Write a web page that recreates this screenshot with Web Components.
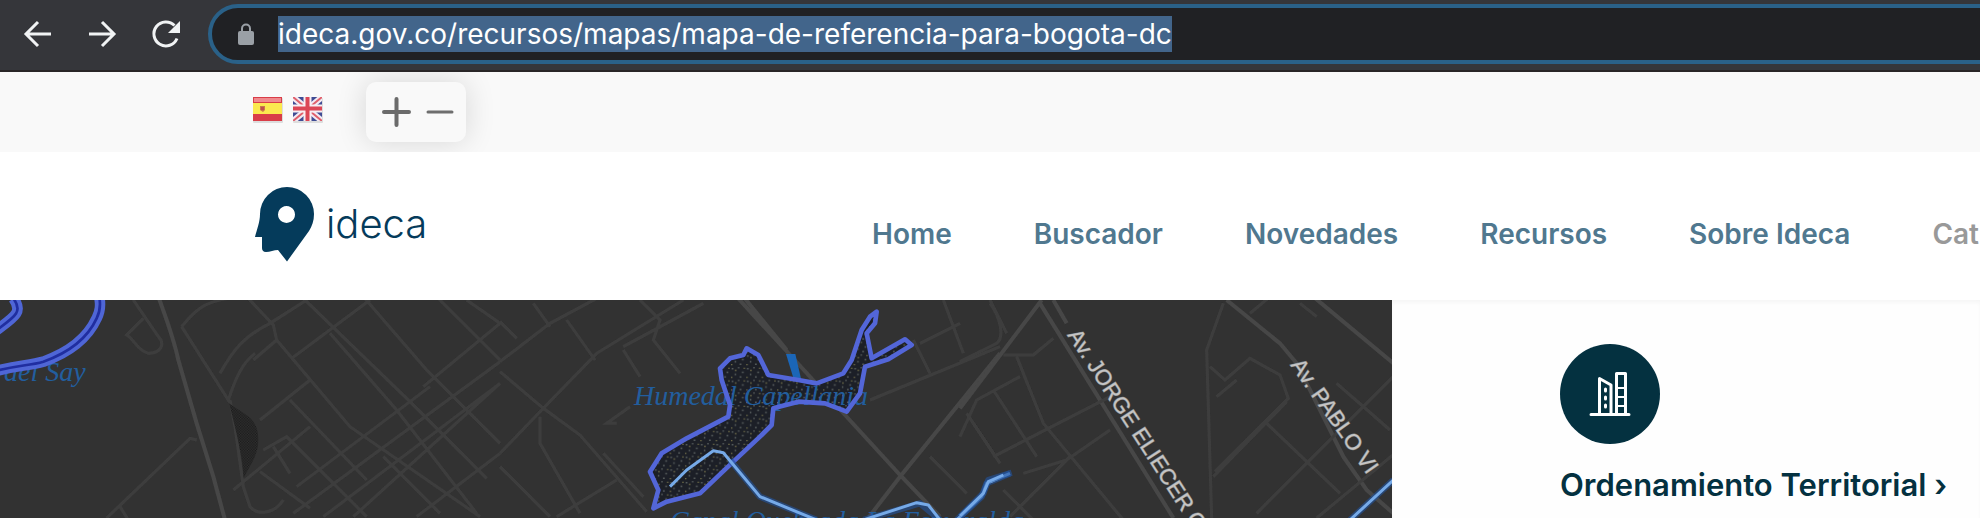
<!DOCTYPE html>
<html lang="es">
<head>
<meta charset="utf-8">
<meta name="viewport" content="width=device-width, initial-scale=1">
<title>Mapa de referencia para Bogotá D.C.</title>
<style>
  html, body { margin: 0; height: 100%; }
  body { font-family: Inter, "Liberation Sans", sans-serif; background: #fff; overflow: hidden; }
</style>
</head>
<body>
<ideca-page></ideca-page>

<script>
const define = (name, html) => {
  const template = document.createElement('template');
  template.innerHTML = html;
  customElements.define(name, class extends HTMLElement {
    constructor() {
      super();
      this.attachShadow({ mode: 'open' }).append(template.content.cloneNode(true));
    }
  });
};

define('browser-bar', `
<style>
  :host { display: flex; align-items: center; box-sizing: border-box; height: 72px; padding: 0 0 2px 20px;
    background: #35363a; border-bottom: 2px solid #292627; overflow: hidden; }
  button { flex: none; width: 36px; height: 36px; margin-right: 28px; padding: 0; border: 0; background: none; }
  button svg { display: block; }
  form { flex: 1; display: flex; align-items: center; box-sizing: border-box; height: 60px; margin: 0 -40px 0 -4px;
    padding-left: 26px; border: 4px solid #2a6188; border-radius: 30px; background: #202124; }
  .lock { flex: none; width: 16px; height: 22px; margin-right: 24px; }
  input { width: 894px; height: 36px; box-sizing: border-box; padding: 0; border: 0; outline: 0;
    background: #42658b; color: #fff; font: 28px/36px Inter, sans-serif; }
</style>
<button aria-label="Atrás"><svg width="36" height="36" viewBox="0 0 36 36" fill="none" stroke="#f1f3f4" stroke-width="3"><path d="M31 18H7M18 6 6 18l12 12"/></svg></button>
<button aria-label="Adelante"><svg width="36" height="36" viewBox="0 0 36 36" fill="none" stroke="#f1f3f4" stroke-width="3"><path d="M5 18h24M18 6l12 12-12 12"/></svg></button>
<button aria-label="Recargar"><svg width="36" height="36" viewBox="0 0 36 36" fill="none" stroke="#f1f3f4" stroke-width="3"><path d="M29 22.500A12 12 0 1 1 26.500 9.500"/><path d="M32 5v12H20z" fill="#f1f3f4" stroke="none"/></svg></button>
<form>
  <svg class="lock" viewBox="0 0 16 22"><path d="M4 9V5.500a4 4 0 0 1 8 0V9" fill="none" stroke="#9aa0a6" stroke-width="2"/><rect y="8" width="16" height="14" rx="2" fill="#9aa0a6"/></svg>
  <input aria-label="Dirección" value="ideca.gov.co/recursos/mapas/mapa-de-referencia-para-bogota-dc">
</form>`);

define('utility-bar', `
<style>
  :host { display: flex; align-items: center; box-sizing: border-box; height: 80px; padding-left: 252px;
    background: #f9f9f9; overflow: hidden; }
  a { display: block; width: 32px; height: 32px; margin: 0 8px 6px 0; }
  .zoom { display: flex; align-items: center; justify-content: space-between; box-sizing: border-box;
    width: 100px; height: 60px; margin-left: 34px; padding: 0 11px 0 15px; border-radius: 10px;
    background: #f9f9f9; box-shadow: 0 0 30px rgba(0,0,0,.14); }
  button { width: 32px; height: 32px; padding: 0; border: 0; background: none; }
  svg { display: block; }
</style>
<a href="#es" aria-label="Español"><svg width="32" height="32"><rect x="1" y="5" width="30" height="25" rx="1" fill="#ddd"/><rect x="1" y="4" width="29" height="24" fill="#d93d48"/><rect x="2" y="5" width="27" height="4" fill="#f08a8e"/><rect x="1" y="10" width="29" height="11" fill="#fbe94f"/><path d="M8 13h5v4l-2 2-3-2z" fill="#c97a4a"/><path d="M9 14h3v3H9z" fill="#c0504d"/></svg></a>
<a href="#en" aria-label="English"><svg width="32" height="32"><rect x="1" y="5" width="30" height="25" rx="1" fill="#ddd"/><svg x="1" y="4" width="29" height="24" viewBox="0 0 29 24"><path fill="#3f4c94" d="M0 0h29v24H0z"/><path d="M0 0l29 24M29 0 0 24" stroke="#f3eaf2" stroke-width="6"/><path d="M0 0l29 24M29 0 0 24" stroke="#e0606c" stroke-width="2"/><path d="M14.500 0v24M0 11.500h29" stroke="#f8eef2" stroke-width="8"/><path d="M14.500 0v24M0 11.500h29" stroke="#dc4656" stroke-width="4"/></svg></svg></a>
<div class="zoom">
  <button aria-label="Aumentar texto"><svg width="32" height="32" stroke="#6b6b6b" stroke-width="4" stroke-linecap="round"><path d="M3 16h25M15.500 3v26"/></svg></button>
  <button aria-label="Reducir texto"><svg width="32" height="32" stroke="#6e6e6e" stroke-width="3" stroke-linecap="round"><path d="M5 16h24"/></svg></button>
</div>`);

define('nav-link', `
<style>
  :host { display: block; flex: none; }
  a { color: #50788f; text-decoration: none; font-size: 28px; font-weight: 600; line-height: 36px; white-space: nowrap; }
  :host([muted]) a { color: #999; }
</style>
<a href="#"><slot></slot></a>`);

define('site-header', `
<style>
  :host { display: flex; box-sizing: border-box; height: 148px; padding-left: 254px; background: #fff; overflow: hidden; }
  .brand { flex: none; display: flex; width: 618px; padding-top: 34px; box-sizing: border-box; color: #053b5b; text-decoration: none; }
  .brand svg { width: 60px; height: 76px; margin-right: 12px; }
  .brand span { font-size: 40px; font-weight: 300; line-height: 48px; padding-top: 14px; }
  nav { display: flex; gap: 82px; padding-top: 64px; }
</style>
<a class="brand" href="#"><svg viewBox="0 0 60 76"><path fill="#053b5b" fill-rule="evenodd" d="M1 51c2-8 5-15 5-23a27 27 0 0 1 54 0c0 7-2 12-5 17L33 75.500 24 64c-4 0-8 2-12 2-3 0-4-2-4-4V51zM32.500 20a8.500 8.500 0 1 0 .01 0z"/></svg><span>ideca</span></a>
<nav aria-label="Principal">
  <nav-link>Home</nav-link><nav-link>Buscador</nav-link><nav-link>Novedades</nav-link><nav-link>Recursos</nav-link><nav-link>Sobre Ideca</nav-link><nav-link muted>Cat</nav-link>
</nav>`);

define('city-map', `
<style>
  :host { display: block; background: #323232; overflow: hidden; }
  svg { display: block; width: 100%; height: 100%; }
  .road { fill: none; stroke: #3e3e3e; stroke-width: 9; }
  .main { stroke: #474747; stroke-width: 12; }
  .river { fill: none; stroke: #76aae8; stroke-width: 9; stroke-linejoin: round; }
  .glow { stroke: #22549e; stroke-width: 19; opacity: .6; }
  .shore { fill: none; stroke: #5366d8; stroke-width: 14; stroke-linejoin: round; }
  .water { font: italic 28px "Liberation Serif", serif; fill: #225e9e; }
  .street { font: 22px "Liberation Sans", sans-serif; fill: #c4c4c4; stroke: #c4c4c4; stroke-width: 1; stroke-opacity: .5; }
</style>
<svg viewBox="0 0 1392 218" preserveAspectRatio="xMinYMin slice" role="img" aria-label="Mapa de referencia">
  <defs>
    <pattern id="marsh" width="8" height="8" patternUnits="userSpaceOnUse"><rect width="8" height="8" fill="#1b1b1b"/><path d="M0 0h4v4H0zM4 4h4v4H4z" fill="#303030"/></pattern>
    <pattern id="speck" width="46" height="38" patternUnits="userSpaceOnUse"><rect width="46" height="38" fill="#1c1f27"/><path d="M5 6h5v4H5zM24 3h4v4h-4zM36 17h5v4h-5zM14 23h4v5h-4zM29 31h5v4h-5z" fill="#5a6060"/><path d="M15 11h4v4h-4zM3 32h4v4H3zM41 5h4v4h-4z" fill="#77734b"/></pattern>
    <filter id="soft"><feGaussianBlur stdDeviation="2"/></filter>
  </defs>
  <g transform="translate(0 -10) scale(.33333)">
    <g filter="url(#soft)">
    <path class="road main" d="M475 20C500 90 520 140 535 210L590 400 640 560 675 690"/>
    <path class="road" d="M320 684 570 445 590 450M360 650l25 40M400 30l75 110M475 140c20 20 10 50-30 50-35-10-40-40-65-55l50-50M545 110c40-50 70-75 140-85M545 110l140 220c20-60 40-110 80-140M660 250C700 180 730 140 810 100L920 30M740 20l80 85 10 45 220 260 390 270M830 150l-70 60M690 330l15 80 25 180 20 60c20 25 70 25 100-20M700 600 930 410M780 390l150-120M870 330l230 240M875 205 1110 30M910 25l320 310 230 230M990 130l200 230 240 310M1090 20l190 220 220 220M1310 20l190 190M1400 30l100 70M880 670 1500 215M1270 290l230-190M970 680l530-400M890 590l400-300M790 480l70-40 240 240M780 545l150 110M1250 680l250-190M1060 680l440-400M1150 500l170 170M820 470l50 80"/>
    </g>
    <path d="M687 340c45 35 88 40 88 110 0 45-22 70-44 115-2-45-10-95-44-225z" fill="url(#marsh)"/>
  </g>
  <text class="water" x="4" y="81">del Say</text>
  <g transform="translate(0 -10) scale(.33333)" fill="none" stroke-linejoin="round">
    <path stroke="#4f66d6" stroke-width="32" d="M-60 260C20 225 80 230 130 215 200 190 260 150 290 85c10-20 15-40 5-75M-10 120c55-40 80-55 50-95"/><path stroke="#202ea0" stroke-width="8" d="M-60 260C20 225 80 230 130 215 200 190 260 150 290 85c10-20 15-40 5-75M-10 120c55-40 80-55 50-95"/>
  </g>
  <g transform="translate(500 -10) scale(.33333)">
    <g filter="url(#soft)">
    <path class="road" d="M0 215 150 100 290 25M0 95l50 50M100 40l50 70M200 90l85 120M0 245l130 110 110 80 200 230M0 490 130 355 290 190 550 30M120 380l0 80 120 210M0 530l150 150M170 680 350 570M310 490l120 130M350 400l-30 0 70-50M370 180l50 80M370 170 610 40M420 30l60 60-20 60 80 100M1110 330 1500 170M1240 150l50 100M1260 160l120-60M1330 30l60 160M1290 500l110 110M1400 370l100 150M1470 30l50 100"/>
    <path class="road main" d="M710 20 1200 555 1320 680M730 20 860 180M1100 690l100-130L1330 400 1500 190"/>
    </g>
    <path d="M740 175 775 195 805 255 895 270 950 280 1030 250 1055 210 1085 120 1110 80 1130 65 1125 100 1100 130 1115 205 1215 148 1235 165 1165 208 1095 230 1080 310 1040 365 975 340 895 335 820 355 815 405 780 440 700 515 600 610 500 635 460 655 475 600 450 545 485 490 560 445 685 380 690 345 665 270 660 235 690 205 730 195z" fill="url(#speck)"/>
  </g>
  <text class="water" x="634" y="105">Humedal Capellania</text>
  <text class="water" x="670" y="230">Canal Quebrada La Esmeralda</text>
  <g transform="translate(500 -10) scale(.33333)">
    <path d="M858 192h28l18 78h-22z" fill="#1b66b7"/>
    <path class="shore" d="M740 175 775 195 805 255 895 270 950 280 1030 250 1055 210 1085 120 1110 80 1130 65 1125 100 1100 130 1115 205 1215 148 1235 165 1165 208 1095 230 1080 310 1040 365 975 340 895 335 820 355 815 405 780 440 700 515 600 610 500 635 460 655 475 600 450 545 485 490 560 445 685 380 690 345 665 270 660 235 690 205 730 195z"/>
    <path class="river glow" d="M690 510l90 110 170 70M1090 690l170-50 60 50M1370 690l75-70 15-40 70-30"/>
    <path class="river" d="M510 590 560 540 640 482 670 488 780 620 950 690M1090 690 1250 638 1285 645 1320 690M1370 690 1445 620 1460 580 1530 550"/>
  </g>
  <g transform="translate(960 -10) scale(.33333)">
    <g filter="url(#soft)">
    <path class="road main" d="M245 30 0 355M240 40 640 684M280 30 320 100M800 30 960 160 1010 220 1150 500 1220 600 1300 670M1060 20l240 200"/>
    <path class="road" d="M790 40 740 180 755 684M0 215 110 160c25-20 10-80-20-120M130 195l90 0 60-50M0 440l50-110 130-70M100 300l130 200M170 200l80 200 240 290M100 500l370-190M190 550l130-40 130-90M150 680 330 500M40 400l60 90M130 600l90 90M750 230l45 40 75-65 90 50 25 70-220 220M770 320l60-50M760 560 980 335M920 400l220 210M890 670 1300 260M1130 280l160 140M1070 684l230-190M870 70l60-50M1020 40l50 40"/>
    </g>
    <path class="river glow" d="M0 680l70-70 15-40 70-22M1170 690l130-120"/>
    <path class="river" d="M0 678 70 610 85 575 130 555M1170 690 1300 570"/>
  </g>
  <text class="street" transform="translate(1067 35) rotate(57)">Av. JORGE ELIECER GAITAN</text>
  <text class="street" transform="translate(1290 65) rotate(55)">Av. PABLO VI</text>
  </svg>`);

define('topic-card', `
<style>
  :host { display: block; padding: 44px 0 0 168px; background: #fefefe; box-shadow: inset 0 3px 4px -1px #f4f4f4; overflow: hidden; }
  .icon { display: block; width: 100px; height: 100px; border-radius: 50%; background: #043140; }
  h2 { margin: 21px 0 0; font-size: 31px; font-weight: 600; line-height: 40px; white-space: nowrap; }
  a { color: #043140; text-decoration: none; }
</style>
<svg class="icon" viewBox="0 0 100 100" fill="none" stroke="#fff" stroke-width="3" stroke-linecap="round" stroke-linejoin="round"><path d="M31 70.500h38M39.500 70V34.500L51 41v29M56.500 70V29.500h9V70"/><path stroke-width="2" d="M57 44h8M57 53h8M57 62h8"/><path d="M45.500 45v2M45.500 53v2M45.500 61v2"/></svg>
<h2><a href="#"><slot></slot></a></h2>`);

define('ideca-page', `
<style>
  :host { display: flex; flex-direction: column; height: 100vh; overflow: hidden; }
  browser-bar, utility-bar, site-header { flex: none; }
  main { flex: 1; min-height: 0; display: grid; grid-template-columns: minmax(0, 1392fr) minmax(0, 588fr); grid-template-rows: minmax(0, 1fr); }
</style>
<browser-bar></browser-bar>
<utility-bar></utility-bar>
<site-header></site-header>
<main><city-map></city-map><topic-card>Ordenamiento Territorial ›</topic-card></main>`);
</script>
</body>
</html>
